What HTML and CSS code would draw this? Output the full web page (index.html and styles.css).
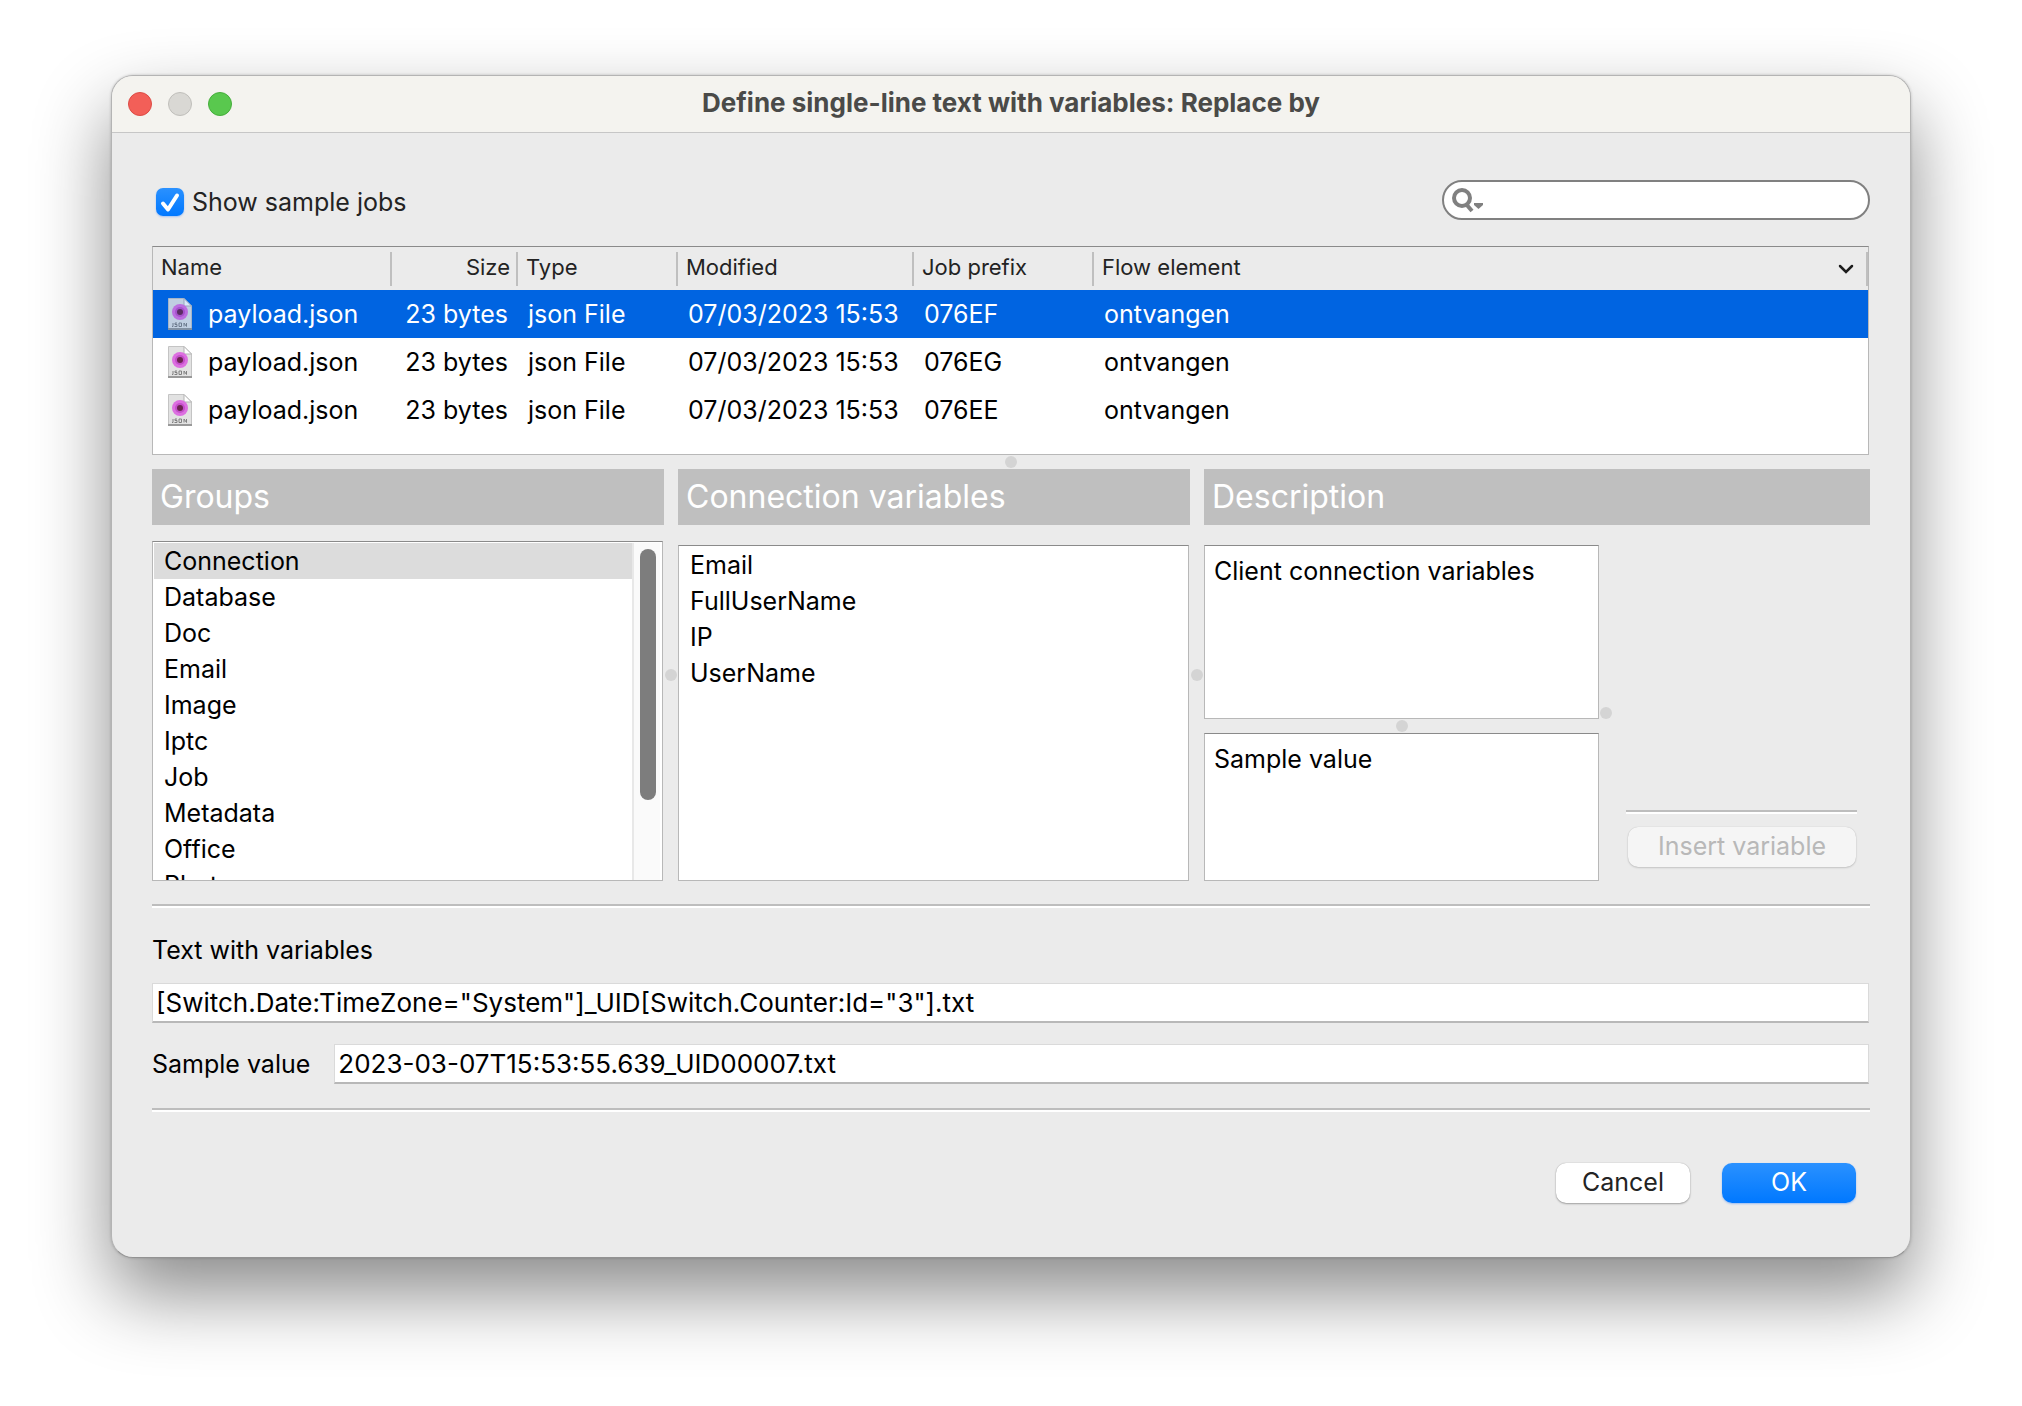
FILE: index.html
```html
<!DOCTYPE html>
<html lang="en">
<head>
<meta charset="utf-8">
<title>Define single-line text with variables: Replace by</title>
<link rel="stylesheet" href="styles.css">
</head>
<body>
<svg width="0" height="0" class="defs" aria-hidden="true">
  <symbol id="json-file" viewBox="0 0 24 32">
    <path d="M0.5 0.5H16L23.5 8V31.5H0.500Z" fill="#e2e2e2" stroke="#c4c4c4"/>
    <path d="M16 0.500V8H23.500Z" fill="#fff" stroke="#b4b4b4"/>
    <circle cx="12" cy="14" r="8" fill="#dc6fe0"/>
    <circle cx="12" cy="14" r="5" fill="#c44fca"/>
    <circle cx="12" cy="14" r="3" fill="#6b2350"/>
    <path d="M5 25v3.500h-1M9 25h-2v1.500H9V28.500H6.500M11 25h2.500v3.500H11ZM16 28.500V25L18.500 28.500V25" fill="none" stroke="#808080" stroke-width="1"/>
    <path d="M0 31H24" stroke="#999" stroke-width="2"/>
  </symbol>
</svg>
<main class="window">
  <header class="titlebar">
    <div class="lights">
      <button class="light light-close" aria-label="Close"></button>
      <button class="light light-min" aria-label="Minimise" disabled></button>
      <button class="light light-zoom" aria-label="Zoom"></button>
    </div>
    <h1 class="title">Define single-line text with variables: Replace by</h1>
  </header>
  <div class="content">
    <div class="toolbar">
      <label class="check">
        <span class="check-box">
          <input type="checkbox" class="check-input" checked>
          <svg class="check-mark" viewBox="0 0 28 28" aria-hidden="true"><path d="M7 15.500L12 21.500L21 7.500" fill="none" stroke="#fff" stroke-width="4" stroke-linecap="round" stroke-linejoin="round"/></svg>
        </span>
        <span>Show sample jobs</span>
      </label>
      <label class="search">
        <svg class="search-icon" width="34" height="28" viewBox="0 0 34 28" aria-hidden="true"><circle cx="12" cy="12" r="8" fill="none" stroke="#808080" stroke-width="4"/><path d="M16 18L22 25" stroke="#808080" stroke-width="4"/><path d="M24 17H33V19L28.500 23L24 19Z" fill="#808080"/></svg>
        <input type="text" class="search-input" aria-label="Search">
      </label>
    </div>

    <div class="jobs">
      <table class="table">
        <colgroup><col class="c-name"><col class="c-size"><col class="c-type"><col class="c-mod"><col class="c-prefix"><col></colgroup>
        <thead>
          <tr>
            <th><div class="th">Name</div></th>
            <th><div class="th th-right">Size</div></th>
            <th><div class="th">Type</div></th>
            <th><div class="th">Modified</div></th>
            <th><div class="th">Job prefix</div></th>
            <th><div class="th th-last"><span>Flow element</span><svg width="16" height="10" viewBox="0 0 16 10" aria-hidden="true"><path d="M2 2L8 8L14 2" fill="none" stroke="#1c1c1c" stroke-width="2.500" stroke-linecap="round"/></svg></div></th>
          </tr>
        </thead>
        <tbody>
          <tr class="selected"><td><div class="file"><svg class="file-icon"><use href="#json-file"/></svg>payload.json</div></td><td class="right">23 bytes</td><td>json File</td><td>07/03/2023 15:53</td><td>076EF</td><td>ontvangen</td></tr>
          <tr><td><div class="file"><svg class="file-icon"><use href="#json-file"/></svg>payload.json</div></td><td class="right">23 bytes</td><td>json File</td><td>07/03/2023 15:53</td><td>076EG</td><td>ontvangen</td></tr>
          <tr><td><div class="file"><svg class="file-icon"><use href="#json-file"/></svg>payload.json</div></td><td class="right">23 bytes</td><td>json File</td><td>07/03/2023 15:53</td><td>076EE</td><td>ontvangen</td></tr>
        </tbody>
      </table>
    </div>
    <div class="split split-h"><span class="dot"></span></div>

    <div class="panels">
      <section class="panel">
        <h2 class="heading">Groups</h2>
        <div class="box groups">
          <ul class="list" role="listbox" aria-label="Groups">
            <li class="item item-on" role="option" aria-selected="true">Connection</li>
            <li class="item" role="option">Database</li>
            <li class="item" role="option">Doc</li>
            <li class="item" role="option">Email</li>
            <li class="item" role="option">Image</li>
            <li class="item" role="option">Iptc</li>
            <li class="item" role="option">Job</li>
            <li class="item" role="option">Metadata</li>
            <li class="item" role="option">Office</li>
            <li class="item" role="option">Photo</li>
          </ul>
          <div class="track"><div class="thumb"></div></div>
        </div>
      </section>
      <div class="split split-v"><span class="dot"></span></div>
      <section class="panel">
        <h2 class="heading">Connection variables</h2>
        <div class="box variables">
          <ul class="list" role="listbox" aria-label="Connection variables">
            <li class="item" role="option">Email</li>
            <li class="item" role="option">FullUserName</li>
            <li class="item" role="option">IP</li>
            <li class="item" role="option">UserName</li>
          </ul>
        </div>
      </section>
      <div class="split split-v"><span class="dot"></span></div>
      <section class="panel panel-wide">
        <h2 class="heading">Description</h2>
        <div class="details">
          <div class="texts">
            <textarea class="box note note-tall" aria-label="Description" readonly>Client connection variables</textarea>
            <div class="split split-h"><span class="dot"></span></div>
            <textarea class="box note" aria-label="Sample value" readonly>Sample value</textarea>
          </div>
          <div class="split split-d"><span class="dot"></span></div>
          <div class="insert">
            <hr class="rule">
            <button class="btn btn-wide" disabled>Insert variable</button>
          </div>
        </div>
      </section>
    </div>

    <hr class="rule">
    <form class="form">
      <label class="label" for="text-vars">Text with variables</label>
      <input class="field" id="text-vars" type="text" value="[Switch.Date:TimeZone=&quot;System&quot;]_UID[Switch.Counter:Id=&quot;3&quot;].txt">
      <div class="row">
        <label class="label" for="sample">Sample value</label>
        <input class="field" id="sample" type="text" readonly value="2023-03-07T15:53:55.639_UID00007.txt">
      </div>
    </form>
    <hr class="rule">
    <footer class="actions">
      <button class="btn">Cancel</button>
      <button class="btn btn-primary">OK</button>
    </footer>
  </div>
</main>
</body>
</html>
```

FILE: styles.css
```css
* { box-sizing: border-box; }

body {
  margin: 0;
  padding: 75px 111px 148px;
  background: #fff;
  color: #000;
  font: 25px/36px Inter, "Liberation Sans", sans-serif;
}

h1, h2, ul, hr { margin: 0; padding: 0; }
button, input, textarea { font: inherit; color: inherit; margin: 0; }
.defs { position: absolute; }

.window {
  border: 1px solid #b4b4b4;
  border-bottom-color: #929292;
  border-radius: 22px;
  background: #ebebeb;
  box-shadow: 0 0 3px rgba(0, 0, 0, 0.2), 0 36px 76px rgba(0, 0, 0, 0.46);
}

/* Title bar */
.titlebar {
  display: grid;
  grid-template-columns: 120px 1fr 120px;
  align-items: center;
  height: 57px;
  padding: 0 16px;
  border-bottom: 1px solid #c6c6c6;
  border-radius: 21px 21px 0 0;
  background: #f4f3ef;
}
.lights { display: flex; gap: 16px; }
.light { width: 24px; height: 24px; padding: 0; border: 1px solid; border-radius: 50%; }
.light-close { background: #f35f58; border-color: #dd4b45; }
.light-min { background: #d9d8d4; border-color: #c0bfbb; }
.light-zoom { background: #59c84e; border-color: #45ae3b; }
.title { padding-bottom: 2px; color: #4a4a48; font-size: 26px; font-weight: 700; line-height: 36px; text-align: center; }

.content { padding: 47px 40px 54px; }

/* Toolbar */
.toolbar { display: flex; justify-content: space-between; align-items: flex-start; height: 66px; }
.check { display: flex; align-items: center; gap: 8px; height: 44px; padding-left: 4px; color: #232323; }
.check-box { display: grid; width: 28px; height: 28px; }
.check-input {
  grid-area: 1 / 1;
  appearance: none;
  width: 28px;
  height: 28px;
  border-radius: 7px;
  background: linear-gradient(#2a91ff, #0078ff);
  box-shadow: 0 1px 2px rgba(0, 100, 255, 0.3);
}
.check-mark { grid-area: 1 / 1; width: 28px; height: 28px; pointer-events: none; }
.search {
  display: flex;
  align-items: center;
  width: 428px;
  height: 40px;
  padding: 0 16px 0 6px;
  border: 2px solid #808080;
  border-radius: 20px;
  background: #fff;
}
.search-input { flex: 1; min-width: 0; height: 32px; border: 0; outline: 0; background: none; }

/* Job table */
.jobs {
  height: 209px;
  margin-right: 1px;
  border: 1px solid #b8b8b8;
  border-top-color: #8a8a8a;
  background: #fff;
}
.table { width: 100%; table-layout: fixed; border-collapse: collapse; }
.c-name { width: 239px; }
.c-size { width: 126px; }
.c-type { width: 160px; }
.c-mod { width: 236px; }
.c-prefix { width: 180px; }
th, td { padding: 0; text-align: left; white-space: nowrap; }
th { height: 43px; background: #ebebeb; font-weight: 400; }
.th {
  height: 34px;
  padding: 0 8px;
  border-right: 2px solid #bfbfbf;
  color: #232323;
  font-size: 22px;
  line-height: 30px;
}
.th-right { padding-right: 6px; text-align: right; }
.th-last { display: flex; justify-content: space-between; padding-right: 12px; }
.th-last svg { margin-top: 12px; }
td { height: 48px; padding: 0 10px; }
td.right { text-align: right; }
.selected { background: #0064e1; color: #fff; }
.file { display: flex; align-items: center; gap: 16px; padding-left: 5px; }
.file-icon { width: 24px; height: 32px; }
.selected .file-icon { opacity: 0.85; }

/* Splitters */
.split { display: flex; align-items: center; justify-content: center; }
.split-h { height: 14px; }
.split-v, .split-d { width: 14px; }
.dot { flex: none; width: 12px; height: 12px; border-radius: 50%; background: #d4d4d4; }

/* Variable panels */
.panels { display: flex; margin-bottom: 23px; }
.panel { display: flex; flex-direction: column; flex: 512 1 0; min-width: 0; height: 412px; }
.panel-wide { flex-grow: 666; }
.heading {
  height: 56px;
  padding: 0 8px;
  background: #bfbfbf;
  color: #fff;
  font-size: 32px;
  font-weight: 400;
  line-height: 56px;
}
.box { border: 1px solid #b8b8b8; border-top-color: #8a8a8a; background: #fff; }
.groups { display: flex; flex: 1; min-height: 0; margin: 16px 1px 0 0; padding: 1px 2px 0 1px; overflow: hidden; }
.variables { flex: 1; margin: 20px 1px 0 0; padding: 1px; }
.list { flex: 1; list-style: none; }
.item { height: 36px; padding: 0 10px; line-height: 36px; }
.item-on { background: #dcdcdc; }
.track { width: 28px; height: 338px; padding: 6px 0 0 6px; border-left: 2px solid #e8e8e8; background: #fafafa; }
.thumb { width: 16px; height: 251px; border-radius: 8px; background: #7d7d7d; }
.details { display: flex; flex: 1; padding-top: 20px; }
.texts { display: flex; flex-direction: column; flex: 1; min-width: 0; }
.note { display: block; width: 100%; height: 148px; padding: 7px 9px; outline: 0; resize: none; line-height: 36px; }
.note-tall { height: 174px; }
.insert { display: flex; flex-direction: column; justify-content: flex-end; gap: 13px; width: 257px; padding: 0 13px 14px; }
.rule { height: 4px; border: 0; border-top: 2px solid #bdbdbd; background: #fff; }

/* Text fields */
.form { padding: 24px 1px 24px 0; }
.label { display: block; }
.field {
  display: block;
  width: 100%;
  height: 40px;
  padding: 0 3px;
  border: 1px solid #dadada;
  border-bottom: 2px solid #b8b8b8;
  outline: 0;
  background: #fff;
  font-size: 26px;
}
.form > .label { margin-bottom: 15px; }
.row { display: flex; align-items: center; gap: 24px; margin-top: 21px; }
.row .field { flex: 1; }

/* Buttons */
.actions { display: flex; justify-content: flex-end; gap: 32px; padding: 51px 14px 0 0; }
.btn {
  width: 134px;
  height: 40px;
  padding: 0 0 2px;
  border: 0;
  border-radius: 10px;
  background: #fff;
  box-shadow: 0 0 1px rgba(0, 0, 0, 0.3), 0 1px 2px rgba(0, 0, 0, 0.3);
  color: #232323;
  line-height: 36px;
}
.btn-primary { background: linear-gradient(#2a91ff, #0078ff); color: #fff; box-shadow: 0 1px 2px rgba(0, 100, 255, 0.35); }
.btn-wide { width: 228px; margin-left: 2px; background: #f5f5f5; color: #b8b8b8; box-shadow: 0 0 1px rgba(0, 0, 0, 0.2), 0 1px 2px rgba(0, 0, 0, 0.15); }
```
